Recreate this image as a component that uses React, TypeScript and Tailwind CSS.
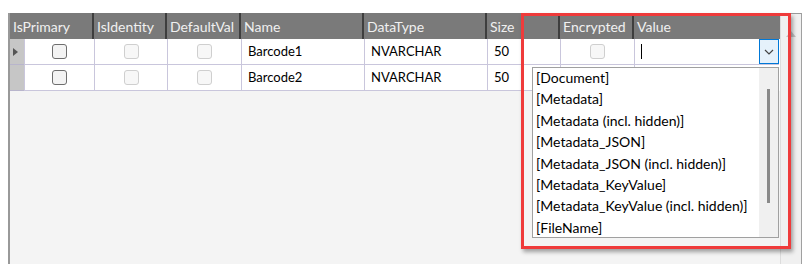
import React from "react";

const cols = [
  { name: "IsPrimary", w: 84 },
  { name: "IsIdentity", w: 73 },
  { name: "DefaultVal", w: 74 },
  { name: "Name", w: 123 },
  { name: "DataType", w: 123 },
  { name: "Size", w: 73 },
  { name: "Encrypted", w: 74 },
  { name: "Value", w: 145 },
];

const Check = ({ enabled }: { enabled: boolean }) => (
  <div
    className={
      enabled
        ? "w-[15px] h-[15px] rounded-[3px] border-[1.5px] border-[#6e6e6e] bg-[#f3f3f3]"
        : "w-[15px] h-[15px] rounded-[3px] border border-[#cfcfcf] bg-[#f7f7f7]"
    }
  />
);

const items = [
  "[Document]",
  "[Metadata]",
  "[Metadata (incl. hidden)]",
  "[Metadata_JSON]",
  "[Metadata_JSON (incl. hidden)]",
  "[Metadata_KeyValue]",
  "[Metadata_KeyValue (incl. hidden)]",
  "[FileName]",
];

const Row = ({ name, first }: { name: string; first: boolean }) => (
  <div className="flex h-[26px]">
    <div className="w-[14px] bg-[#c6c6c6] border-b border-[#b8b5cc] flex items-center">
      {first && (
        <svg width="8" height="10" viewBox="0 0 8 10" className="ml-[2px]">
          <path d="M1 1 L6 5 L1 9 Z" fill="#555" />
        </svg>
      )}
    </div>
    <div className="w-[70px] bg-white border-l border-b border-[#c9c6dc] flex items-center justify-center">
      <Check enabled />
    </div>
    <div className="w-[73px] bg-white border-l border-b border-[#c9c6dc] flex items-center justify-center">
      <Check enabled={false} />
    </div>
    <div className="w-[74px] bg-white border-l border-b border-[#c9c6dc] flex items-center justify-center">
      <Check enabled={false} />
    </div>
    <div className="w-[123px] bg-white border-l border-b border-[#c9c6dc] flex items-center pl-[6px]">{name}</div>
    <div className="w-[123px] bg-white border-l border-b border-[#c9c6dc] flex items-center pl-[6px]">NVARCHAR</div>
    <div className="w-[73px] bg-white border-l border-b border-[#c9c6dc] flex items-center pl-[6px]">50</div>
    <div className="w-[74px] bg-white border-l border-b border-[#c9c6dc] flex items-center justify-center">
      {first && <Check enabled={false} />}
    </div>
    <div className="w-[145px] bg-white border-l border-b border-[#c9c6dc] flex items-center pl-[6px] relative">
      {first && (
        <>
          <div className="w-[1px] h-[15px] bg-black" />
          <div className="absolute right-0 top-0 w-[20px] h-[25px] bg-[#e5f1fb] border border-[#0078d7] flex items-center justify-center">
            <svg width="10" height="6" viewBox="0 0 10 6">
              <path d="M1 1 L5 5 L9 1" stroke="#444" strokeWidth="1.2" fill="none" />
            </svg>
          </div>
        </>
      )}
    </div>
  </div>
);

export default function App() {
  return (
    <div
      className="w-[808px] h-[264px] bg-white relative overflow-hidden text-[13px] text-black"
      style={{ fontFamily: "Lato, 'Open Sans', sans-serif" }}
    >
      <div className="flex pt-[13px] pl-[8px] h-full">
        <div className="flex flex-col w-[772px] border-l-2 border-[#999999] h-full">
          <div className="flex h-[26px] bg-[#7a7a7a] text-[#f0f0f0] text-[14px]">
            {cols.map((c, i) => (
              <div
                key={c.name}
                className={
                  i < cols.length - 1
                    ? "flex items-center pl-[3px] border-r-2 border-[#3e3e3e]"
                    : "flex items-center pl-[3px]"
                }
                style={{ width: c.w }}
              >
                {c.name}
              </div>
            ))}
          </div>
          <Row name="Barcode1" first />
          <Row name="Barcode2" first={false} />
          <div className="flex-1 bg-[#f4f4f4]" />
        </div>
        <div className="w-[22px] bg-[#f0f0f0] border-l border-[#dcdcdc] border-r border-r-[#a0a0a0] h-full flex flex-col items-center">
          <div className="h-[1px] w-full bg-[#9a9a9a]" />
          <svg width="10" height="6" viewBox="0 0 10 6" className="mt-[17px]">
            <path d="M0 6 L5 0 L10 6 Z" fill="#c4c4c4" />
          </svg>
        </div>
      </div>

      {/* dropdown list */}
      <div className="absolute left-[532px] top-[67px] w-[247px] h-[171px] bg-white border border-[#a0a0a0] flex text-[14px]">
        <div className="flex-1 pl-[3px] -mt-[1px]">
          {items.map((t) => (
            <div key={t} className="h-[21.4px] leading-[21.4px] whitespace-nowrap">
              {t}
            </div>
          ))}
        </div>
        <div className="w-[19px] bg-[#f0f0f0] relative">
          <div className="absolute left-[8px] top-[21px] w-[3px] h-[114px] bg-[#8a8a8a]" />
        </div>
      </div>

      {/* red annotation rectangle */}
      <div className="absolute left-[521px] top-[13px] w-[270px] h-[236px] border-[3px] border-[#ef3b3b] shadow-[2px_3px_4px_rgba(0,0,0,0.35)]" />
    </div>
  );
}
